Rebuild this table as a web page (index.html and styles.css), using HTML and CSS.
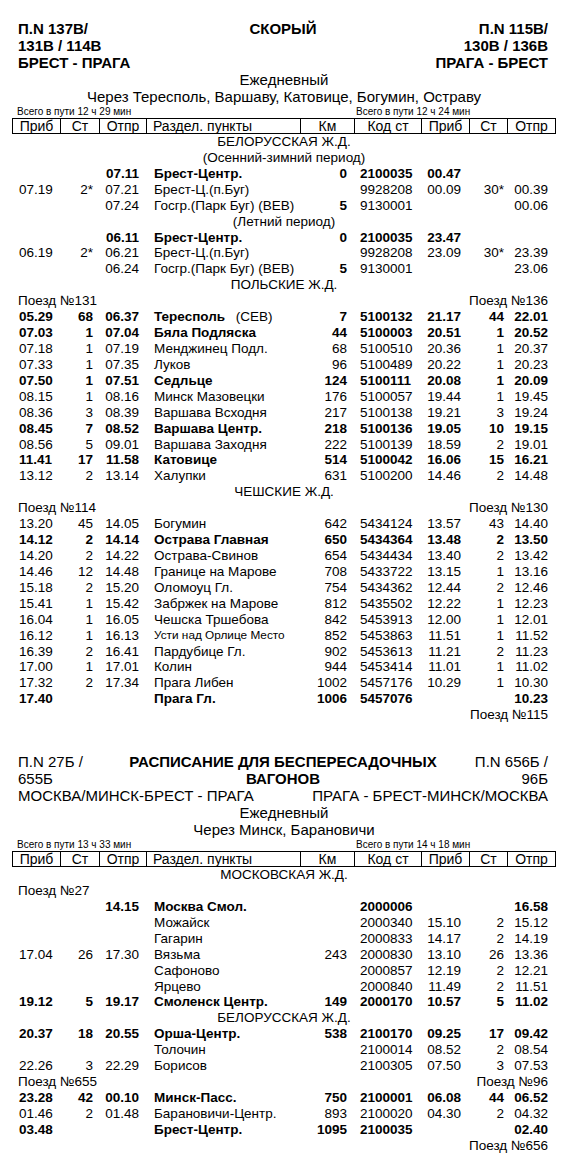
FILE: index.html
```html
<!DOCTYPE html>
<html lang="ru">
<head>
<meta charset="utf-8">
<title>Расписание Брест - Прага</title>
<link rel="stylesheet" href="styles.css">
</head>
<body>
<div class="page">

<section class="sched">
  <div class="title bold">
    <div class="tl">П.N 137В/<br>131В / 114В<br>БРЕСТ - ПРАГА</div>
    <div class="tc">СКОРЫЙ</div>
    <div class="tr">П.N 115В/<br>130В / 136В<br>ПРАГА - БРЕСТ</div>
  </div>
  <div class="sub">Ежедневный</div>
  <div class="sub">Через Тересполь, Варшаву, Катовице, Богумин, Остраву</div>
  <div class="total"><span>Всего в пути 12 ч 29 мин</span><span>Всего в пути 12 ч 24 мин</span></div>
  <div class="head"><span>Приб</span><span>Ст</span><span>Отпр</span><span>Раздел. пункты</span><span>Км</span><span>Код ст</span><span>Приб</span><span>Ст</span><span>Отпр</span></div>

  <div class="sec">БЕЛОРУССКАЯ Ж.Д.</div>
  <div class="sec">(Осенний-зимний период)</div>
  <div class="r b"><span></span><span></span><span>07.11</span><span>Брест-Центр.</span><span>0</span><span>2100035</span><span>00.47</span><span></span><span></span></div>
  <div class="r"><span>07.19</span><span>2*</span><span>07.21</span><span>Брест-Ц.(п.Буг)</span><span></span><span>9928208</span><span>00.09</span><span>30*</span><span>00.39</span></div>
  <div class="r"><span></span><span></span><span>07.24</span><span>Госгр.(Парк Буг) (ВЕВ)</span><span class="bk">5</span><span>9130001</span><span></span><span></span><span>00.06</span></div>
  <div class="sec">(Летний период)</div>
  <div class="r b"><span></span><span></span><span>06.11</span><span>Брест-Центр.</span><span>0</span><span>2100035</span><span>23.47</span><span></span><span></span></div>
  <div class="r"><span>06.19</span><span>2*</span><span>06.21</span><span>Брест-Ц.(п.Буг)</span><span></span><span>9928208</span><span>23.09</span><span>30*</span><span>23.39</span></div>
  <div class="r"><span></span><span></span><span>06.24</span><span>Госгр.(Парк Буг) (ВЕВ)</span><span class="bk">5</span><span>9130001</span><span></span><span></span><span>23.06</span></div>
  <div class="sec">ПОЛЬСКИЕ Ж.Д.</div>
  <div class="train"><span>Поезд №131</span><span>Поезд №136</span></div>
  <div class="r b"><span>05.29</span><span>68</span><span>06.37</span><span>Тересполь <span class="n">(СЕВ)</span></span><span>7</span><span>5100132</span><span>21.17</span><span>44</span><span>22.01</span></div>
  <div class="r b"><span>07.03</span><span>1</span><span>07.04</span><span>Бяла Подляска</span><span>44</span><span>5100003</span><span>20.51</span><span>1</span><span>20.52</span></div>
  <div class="r"><span>07.18</span><span>1</span><span>07.19</span><span>Менджинец Подл.</span><span>68</span><span>5100510</span><span>20.36</span><span>1</span><span>20.37</span></div>
  <div class="r"><span>07.33</span><span>1</span><span>07.35</span><span>Луков</span><span>96</span><span>5100489</span><span>20.22</span><span>1</span><span>20.23</span></div>
  <div class="r b"><span>07.50</span><span>1</span><span>07.51</span><span>Седльце</span><span>124</span><span>5100111</span><span>20.08</span><span>1</span><span>20.09</span></div>
  <div class="r"><span>08.15</span><span>1</span><span>08.16</span><span>Минск Мазовецки</span><span>176</span><span>5100057</span><span>19.44</span><span>1</span><span>19.45</span></div>
  <div class="r"><span>08.36</span><span>3</span><span>08.39</span><span>Варшава Всходня</span><span>217</span><span>5100138</span><span>19.21</span><span>3</span><span>19.24</span></div>
  <div class="r b"><span>08.45</span><span>7</span><span>08.52</span><span>Варшава Центр.</span><span>218</span><span>5100136</span><span>19.05</span><span>10</span><span>19.15</span></div>
  <div class="r"><span>08.56</span><span>5</span><span>09.01</span><span>Варшава Заходня</span><span>222</span><span>5100139</span><span>18.59</span><span>2</span><span>19.01</span></div>
  <div class="r b"><span>11.41</span><span>17</span><span>11.58</span><span>Катовице</span><span>514</span><span>5100042</span><span>16.06</span><span>15</span><span>16.21</span></div>
  <div class="r"><span>13.12</span><span>2</span><span>13.14</span><span>Халупки</span><span>631</span><span>5100200</span><span>14.46</span><span>2</span><span>14.48</span></div>
  <div class="sec">ЧЕШСКИЕ Ж.Д.</div>
  <div class="train"><span>Поезд №114</span><span>Поезд №130</span></div>
  <div class="r"><span>13.20</span><span>45</span><span>14.05</span><span>Богумин</span><span>642</span><span>5434124</span><span>13.57</span><span>43</span><span>14.40</span></div>
  <div class="r b"><span>14.12</span><span>2</span><span>14.14</span><span>Острава Главная</span><span>650</span><span>5434364</span><span>13.48</span><span>2</span><span>13.50</span></div>
  <div class="r"><span>14.20</span><span>2</span><span>14.22</span><span>Острава-Свинов</span><span>654</span><span>5434434</span><span>13.40</span><span>2</span><span>13.42</span></div>
  <div class="r"><span>14.46</span><span>12</span><span>14.48</span><span>Границе на Марове</span><span>708</span><span>5433722</span><span>13.15</span><span>1</span><span>13.16</span></div>
  <div class="r"><span>15.18</span><span>2</span><span>15.20</span><span>Оломоуц Гл.</span><span>754</span><span>5434362</span><span>12.44</span><span>2</span><span>12.46</span></div>
  <div class="r"><span>15.41</span><span>1</span><span>15.42</span><span>Забржек на Марове</span><span>812</span><span>5435502</span><span>12.22</span><span>1</span><span>12.23</span></div>
  <div class="r"><span>16.04</span><span>1</span><span>16.05</span><span>Чешска Тршебова</span><span>842</span><span>5453913</span><span>12.00</span><span>1</span><span>12.01</span></div>
  <div class="r"><span>16.12</span><span>1</span><span>16.13</span><span class="sm">Усти над Орлице Место</span><span>852</span><span>5453863</span><span>11.51</span><span>1</span><span>11.52</span></div>
  <div class="r"><span>16.39</span><span>2</span><span>16.41</span><span>Пардубице Гл.</span><span>902</span><span>5453613</span><span>11.21</span><span>2</span><span>11.23</span></div>
  <div class="r"><span>17.00</span><span>1</span><span>17.01</span><span>Колин</span><span>944</span><span>5453414</span><span>11.01</span><span>1</span><span>11.02</span></div>
  <div class="r"><span>17.32</span><span>2</span><span>17.34</span><span>Прага Либен</span><span>1002</span><span>5457176</span><span>10.29</span><span>1</span><span>10.30</span></div>
  <div class="r b"><span>17.40</span><span></span><span></span><span>Прага Гл.</span><span>1006</span><span>5457076</span><span></span><span></span><span>10.23</span></div>
  <div class="train"><span></span><span>Поезд №115</span></div>
</section>

<section class="sched">
  <div class="title">
    <div class="tl">П.N 27Б /<br>655Б</div>
    <div class="tc bold">РАСПИСАНИЕ ДЛЯ БЕСПЕРЕСАДОЧНЫХ<br>ВАГОНОВ</div>
    <div class="tr">П.N 656Б /<br>96Б</div>
  </div>
  <div class="route"><span>МОСКВА/МИНСК-БРЕСТ - ПРАГА</span><span>ПРАГА - БРЕСТ-МИНСК/МОСКВА</span></div>
  <div class="sub">Ежедневный</div>
  <div class="sub">Через Минск, Барановичи</div>
  <div class="total"><span>Всего в пути 13 ч 33 мин</span><span>Всего в пути 14 ч 18 мин</span></div>
  <div class="head"><span>Приб</span><span>Ст</span><span>Отпр</span><span>Раздел. пункты</span><span>Км</span><span>Код ст</span><span>Приб</span><span>Ст</span><span>Отпр</span></div>

  <div class="sec">МОСКОВСКАЯ Ж.Д.</div>
  <div class="train"><span>Поезд №27</span><span></span></div>
  <div class="r b"><span></span><span></span><span>14.15</span><span>Москва Смол.</span><span></span><span>2000006</span><span></span><span></span><span>16.58</span></div>
  <div class="r"><span></span><span></span><span></span><span>Можайск</span><span></span><span>2000340</span><span>15.10</span><span>2</span><span>15.12</span></div>
  <div class="r"><span></span><span></span><span></span><span>Гагарин</span><span></span><span>2000833</span><span>14.17</span><span>2</span><span>14.19</span></div>
  <div class="r"><span>17.04</span><span>26</span><span>17.30</span><span>Вязьма</span><span>243</span><span>2000830</span><span>13.10</span><span>26</span><span>13.36</span></div>
  <div class="r"><span></span><span></span><span></span><span>Сафоново</span><span></span><span>2000857</span><span>12.19</span><span>2</span><span>12.21</span></div>
  <div class="r"><span></span><span></span><span></span><span>Ярцево</span><span></span><span>2000840</span><span>11.49</span><span>2</span><span>11.51</span></div>
  <div class="r b"><span>19.12</span><span>5</span><span>19.17</span><span>Смоленск Центр.</span><span>149</span><span>2000170</span><span>10.57</span><span>5</span><span>11.02</span></div>
  <div class="sec">БЕЛОРУССКАЯ Ж.Д.</div>
  <div class="r b"><span>20.37</span><span>18</span><span>20.55</span><span>Орша-Центр.</span><span>538</span><span>2100170</span><span>09.25</span><span>17</span><span>09.42</span></div>
  <div class="r"><span></span><span></span><span></span><span>Толочин</span><span></span><span>2100014</span><span>08.52</span><span>2</span><span>08.54</span></div>
  <div class="r"><span>22.26</span><span>3</span><span>22.29</span><span>Борисов</span><span></span><span>2100305</span><span>07.50</span><span>3</span><span>07.53</span></div>
  <div class="train"><span>Поезд №655</span><span>Поезд №96</span></div>
  <div class="r b"><span>23.28</span><span>42</span><span>00.10</span><span>Минск-Пасс.</span><span>750</span><span>2100001</span><span>06.08</span><span>44</span><span>06.52</span></div>
  <div class="r"><span>01.46</span><span>2</span><span>01.48</span><span>Барановичи-Центр.</span><span>893</span><span>2100020</span><span>04.30</span><span>2</span><span>04.32</span></div>
  <div class="r b"><span>03.48</span><span></span><span></span><span>Брест-Центр.</span><span>1095</span><span>2100035</span><span></span><span></span><span>02.40</span></div>
  <div class="train"><span></span><span>Поезд №656</span></div>
</section>

</div>
</body>
</html>
```

FILE: styles.css
```css
html, body {
  margin: 0;
  padding: 0;
  background: #fff;
}

body {
  color: #000;
  font-family: "Liberation Sans", Arial, sans-serif;
}

.page {
  width: 544px;
  padding: 20px 0 0 12px;
}

.sched + .sched {
  margin-top: 30px;
}

.bold {
  font-weight: bold;
}

.title {
  display: grid;
  grid-template-columns: 1fr auto 1fr;
  padding: 0 8px 0 6px;
  font-size: 15px;
  line-height: 17px;
}

.title .tc {
  text-align: center;
}

.title .tr {
  text-align: right;
}

.route {
  display: flex;
  justify-content: space-between;
  padding: 0 8px 0 6px;
  font-size: 15px;
  line-height: 17px;
}

.sub {
  text-align: center;
  font-size: 15px;
  line-height: 17px;
}

.total {
  display: grid;
  grid-template-columns: 342px 1fr;
  font-size: 10px;
  line-height: 13px;
}

.total span:first-child {
  padding-left: 5px;
}

.total span:last-child {
  padding-left: 2px;
}

.head,
.r {
  display: grid;
  grid-template-columns: 48px 39px 47px 154px 54px 67px 48px 38px 49px;
  white-space: nowrap;
}

.head {
  font-size: 14px;
}

.r {
  font-size: 13.5px;
  line-height: 15.92px;
}

.head span {
  box-sizing: border-box;
  height: 16px;
  line-height: 14px;
  border-top: 1px solid #000;
  border-bottom: 1px solid #000;
  border-left: 1px solid #000;
  text-align: center;
}

.head span:last-child {
  border-right: 1px solid #000;
}

.head span:nth-child(4) {
  text-align: left;
  padding-left: 6px;
}

.r.b {
  font-weight: bold;
}

.r .n {
  font-weight: normal;
}

.r .bk {
  font-weight: bold;
}

.r .sm {
  font-size: 11.8px;
}

.r span:nth-child(1) { padding-left: 7px; }
.r span:nth-child(2) { text-align: right; padding-right: 6px; }
.r span:nth-child(3) { text-align: right; padding-right: 7px; }
.r span:nth-child(4) { padding-left: 8px; }
.r span:nth-child(5) { text-align: right; padding-right: 7px; }
.r span:nth-child(6) { padding-left: 6px; }
.r span:nth-child(7) { text-align: right; padding-right: 8px; }
.r span:nth-child(8) { text-align: right; padding-right: 3px; }
.r span:nth-child(9) { text-align: right; padding-right: 8px; }

.r span span {
  padding: 0;
}

.sec {
  text-align: center;
  font-size: 13.5px;
  line-height: 15.92px;
}

.train {
  display: flex;
  justify-content: space-between;
  padding: 0 8px 0 6px;
  font-size: 13.5px;
  line-height: 15.92px;
}
```
